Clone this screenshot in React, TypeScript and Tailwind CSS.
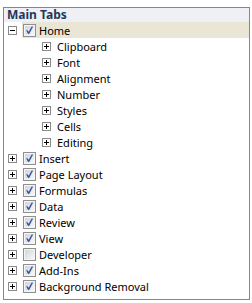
import React from "react";

type Item = { label: string; level: 0 | 1; open?: boolean; checked?: boolean; selected?: boolean };

const ITEMS: Item[] = [
  { label: "Home", level: 0, open: true, checked: true, selected: true },
  { label: "Clipboard", level: 1 },
  { label: "Font", level: 1 },
  { label: "Alignment", level: 1 },
  { label: "Number", level: 1 },
  { label: "Styles", level: 1 },
  { label: "Cells", level: 1 },
  { label: "Editing", level: 1 },
  { label: "Insert", level: 0, checked: true },
  { label: "Page Layout", level: 0, checked: true },
  { label: "Formulas", level: 0, checked: true },
  { label: "Data", level: 0, checked: true },
  { label: "Review", level: 0, checked: true },
  { label: "View", level: 0, checked: true },
  { label: "Developer", level: 0, checked: false },
  { label: "Add-Ins", level: 0, checked: true },
  { label: "Background Removal", level: 0, checked: true },
];

function Expander({ open }: { open?: boolean }) {
  return (
    <svg width="9" height="9" viewBox="0 0 9 9" className="shrink-0">
      <rect x="0.5" y="0.5" width="8" height="8" fill="#fff" stroke="#8a8a8a" />
      <rect x="2" y="4" width="5" height="1" fill="#000" />
      {!open && <rect x="4" y="2" width="1" height="5" fill="#000" />}
    </svg>
  );
}

function Check({ checked }: { checked?: boolean }) {
  return (
    <svg width="13" height="13" viewBox="0 0 13 13" className="shrink-0">
      <defs>
        <linearGradient id="cbfill" x1="0" y1="0" x2="1" y2="1">
          <stop offset="0" stopColor="#d2d4d8" />
          <stop offset="1" stopColor="#f8f8f8" />
        </linearGradient>
      </defs>
      <rect x="0.5" y="0.5" width="12" height="12" fill="#f4f4f4" stroke="#8e8f8f" />
      <rect x="2" y="2" width="9" height="9" fill="url(#cbfill)" />
      {checked && (
        <path d="M3 6.2 L4.6 6.2 L5.6 7.8 L8.6 2.6 L10.2 2.6 L6.2 10 L5 10 Z" fill="#3d5ba4" />
      )}
    </svg>
  );
}

export default function App() {
  return (
    <div className="pl-[3px] pt-[7px]" style={{ fontFamily: '"Noto Sans", "Segoe UI", sans-serif' }}>
      <div className="w-[247px] h-[293px] border border-[#828790] bg-white text-[11px] leading-none text-black">
        <div className="h-[14px] bg-[#eff0f5] pl-[3px] flex items-center font-bold text-[12px] text-[#1e395b]">
          Main Tabs
        </div>
        {ITEMS.map((it) => (
          <div key={it.label} className="h-4 flex items-center">
            {it.level === 0 ? (
              <>
                <div className="w-[18px] pl-1 flex items-center">
                  <Expander open={it.open} />
                </div>
                <div
                  className={
                    "flex-1 h-full flex items-center pl-px gap-[3px] " + (it.selected ? "bg-[#e9e6d6]" : "")
                  }
                >
                  <Check checked={it.checked} />
                  <span className="whitespace-nowrap">{it.label}</span>
                </div>
              </>
            ) : (
              <div className="pl-[38px] flex items-center gap-[6px]">
                <Expander />
                <span className="whitespace-nowrap">{it.label}</span>
              </div>
            )}
          </div>
        ))}
      </div>
    </div>
  );
}
